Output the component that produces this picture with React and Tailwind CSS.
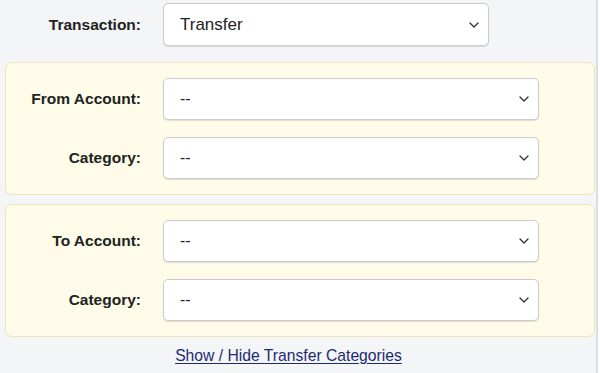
import React from "react";

const Chevron = () => (
  <svg width="10" height="6" viewBox="0 0 10 6" fill="none" className="shrink-0">
    <path d="M1 1l4 4 4-4" stroke="#333" strokeWidth="1.3" strokeLinecap="round" strokeLinejoin="round" />
  </svg>
);

const Select = ({ value, className = "", textClass = "text-[16px]" }) => (
  <div
    className={`flex items-center justify-between bg-white border border-[#cbcbcb] rounded-[5px] shadow-[0_1px_1px_rgba(0,0,0,0.12)] pl-4 pr-[9px] ${className}`}
  >
    <span className={`${textClass} text-[#222]`}>{value}</span>
    <Chevron />
  </div>
);

const Row = ({ label, labelW, children }) => (
  <div className="flex items-center">
    <div className={`${labelW} text-right font-bold text-[15.5px] text-[#222]`}>{label}</div>
    {children}
  </div>
);

const Panel = ({ rows }) => (
  <div className="ml-[5px] w-[590px] bg-[#fefce8] border border-[#efe3bd] rounded-[7px] pt-[15px] pb-[15px] flex flex-col gap-[17px]">
    {rows.map((r) => (
      <Row key={r} label={r} labelW="w-[135px]">
        <Select value="--" className="ml-[22px] w-[376px] h-[42px]" />
      </Row>
    ))}
  </div>
);

export default function App() {
  return (
    <div
      className="flex w-[600px] h-[373px] bg-[#f4f5f7] overflow-hidden"
      style={{ fontFamily: '"Liberation Sans", Arial, sans-serif' }}
    >
      <div className="w-[596px] flex flex-col pt-[3px]">
        <Row label="Transaction:" labelW="w-[141px]">
          <Select value="Transfer" textClass="text-[17px]" className="ml-[22px] w-[326px] h-[43px]" />
        </Row>
        <div className="mt-[16px] flex flex-col gap-[9px]">
          <Panel rows={["From Account:", "Category:"]} />
          <Panel rows={["To Account:", "Category:"]} />
        </div>
        <div className="w-[577px] text-center mt-[7px]">
          <a href="#" className="text-[15.7px] text-[#1b2a73] underline underline-offset-2">
            Show / Hide Transfer Categories
          </a>
        </div>
      </div>
      <div className="w-[2px] bg-[#dcdde0]" />
      <div className="w-[2px] bg-white" />
    </div>
  );
}
